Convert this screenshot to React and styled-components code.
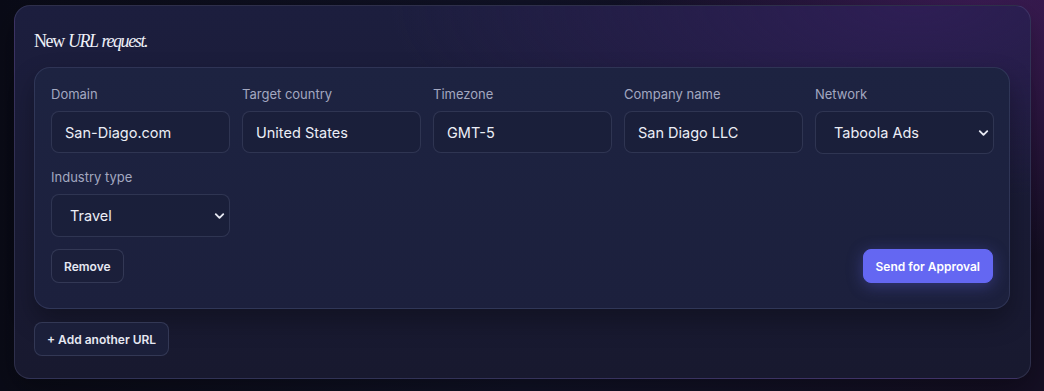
import React from 'react';
import styled, { createGlobalStyle } from 'styled-components';
import { ChevronDown } from 'lucide-react';

const GlobalStyle = createGlobalStyle`
  html, body {
    margin: 0;
    padding: 0;
    width: 1044px;
    height: 391px;
    overflow: hidden;
    background: #0c0e1b;
    font-family: Inter, "Noto Sans", sans-serif;
  }
  * { box-sizing: border-box; }
`;

const Page = styled.div`
  width: 1044px;
  height: 391px;
  padding: 5px 13px 0 14px;
  background:
    radial-gradient(ellipse 520px 340px at 980px 20px, rgba(88, 36, 120, 0.6), transparent 70%),
    linear-gradient(90deg, #0a0b17 0%, #101226 50%, #150f24 100%);
`;

const Outer = styled.section`
  height: 374px;
  border-radius: 16px;
  border: 1px solid rgba(150, 150, 200, 0.18);
  background:
    radial-gradient(ellipse 700px 260px at 900px 0px, rgba(52, 30, 92, 0.75), transparent 75%),
    linear-gradient(180deg, #1c1e3e 0%, #18192f 100%);
  padding: 25px 20px 0 19px;
  box-shadow: 0 10px 30px rgba(0, 0, 0, 0.35);
`;

const Title = styled.h2`
  margin: 0 0 16px;
  font-family: "Liberation Serif", "DejaVu Serif", serif;
  font-weight: 400;
  font-size: 18px;
  letter-spacing: -1.4px;
  word-spacing: 1px;
  color: #eef0f8;
  line-height: 20px;
  em { font-style: italic; }
`;

const Card = styled.div`
  border-radius: 16px;
  border: 1px solid rgba(150, 160, 210, 0.16);
  background: linear-gradient(180deg, #1d2341 0%, #1c203d 100%);
  padding: 18px 16px 25px 16px;
  box-shadow: 0 12px 26px rgba(0, 0, 0, 0.3);
`;

const Grid = styled.div`
  display: grid;
  grid-template-columns: repeat(5, 179px);
  column-gap: 12px;
  row-gap: 15px;
`;

const Field = styled.label`
  display: flex;
  flex-direction: column;
  gap: 9px;
`;

const Label = styled.span`
  font-size: 13px;
  line-height: 16px;
  color: #a3a8c0;
`;

const Input = styled.input`
  height: 42px;
  border-radius: 8px;
  border: 1px solid rgba(160, 170, 210, 0.16);
  background: #1a1f3a;
  color: #eceef6;
  font-family: inherit;
  font-size: 14.5px;
  padding: 0 13px;
  outline: none;
`;

const SelectWrap = styled.div`
  position: relative;
  height: 43px;
`;

const Select = styled.select`
  width: 100%;
  height: 100%;
  appearance: none;
  border-radius: 8px;
  border: 1px solid rgba(160, 170, 210, 0.16);
  background: #1a1f3a;
  color: #eceef6;
  font-family: inherit;
  font-size: 14.5px;
  padding: 0 18px;
  outline: none;
`;

const Chevron = styled(ChevronDown)`
  position: absolute;
  right: 3px;
  top: 50%;
  transform: translateY(-50%);
  color: #e6e8f2;
  pointer-events: none;
`;

const Actions = styled.div`
  display: flex;
  justify-content: space-between;
  align-items: center;
  margin-top: 12px;
`;

const Button = styled.button`
  height: 34px;
  border-radius: 8px;
  font-family: inherit;
  font-size: 12px;
  font-weight: 600;
  padding: 0 12px;
  cursor: pointer;
  color: ${p => (p.$primary ? '#ffffff' : '#e6e8f2')};
  background: ${p => (p.$primary ? '#6467f2' : '#1b1f3a')};
  border: 1px solid ${p => (p.$primary ? '#6467f2' : 'rgba(160, 170, 210, 0.18)')};
  box-shadow: ${p => (p.$primary ? '0 3px 16px rgba(99, 102, 241, 0.35)' : 'none')};
`;

const AddRow = styled.div`
  margin-top: 13px;
`;

function TextField({ label, value }) {
  return (
    <Field>
      <Label>{label}</Label>
      <Input defaultValue={value} />
    </Field>
  );
}

function SelectField({ label, value, options }) {
  return (
    <Field>
      <Label>{label}</Label>
      <SelectWrap>
        <Select defaultValue={value}>
          {options.map(o => <option key={o}>{o}</option>)}
        </Select>
        <Chevron size={15} strokeWidth={3} />
      </SelectWrap>
    </Field>
  );
}

export default function App() {
  return (
    <Page>
      <GlobalStyle />
      <Outer>
        <Title>New <em>URL request.</em></Title>
        <Card>
          <Grid>
            <TextField label="Domain" value="San-Diago.com" />
            <TextField label="Target country" value="United States" />
            <TextField label="Timezone" value="GMT-5" />
            <TextField label="Company name" value="San Diago LLC" />
            <SelectField label="Network" value="Taboola Ads" options={['Taboola Ads', 'Outbrain', 'Google Ads']} />
            <SelectField label="Industry type" value="Travel" options={['Travel', 'Finance', 'Health']} />
          </Grid>
          <Actions>
            <Button>Remove</Button>
            <Button $primary>Send for Approval</Button>
          </Actions>
        </Card>
        <AddRow>
          <Button>+ Add another URL</Button>
        </AddRow>
      </Outer>
    </Page>
  );
}
